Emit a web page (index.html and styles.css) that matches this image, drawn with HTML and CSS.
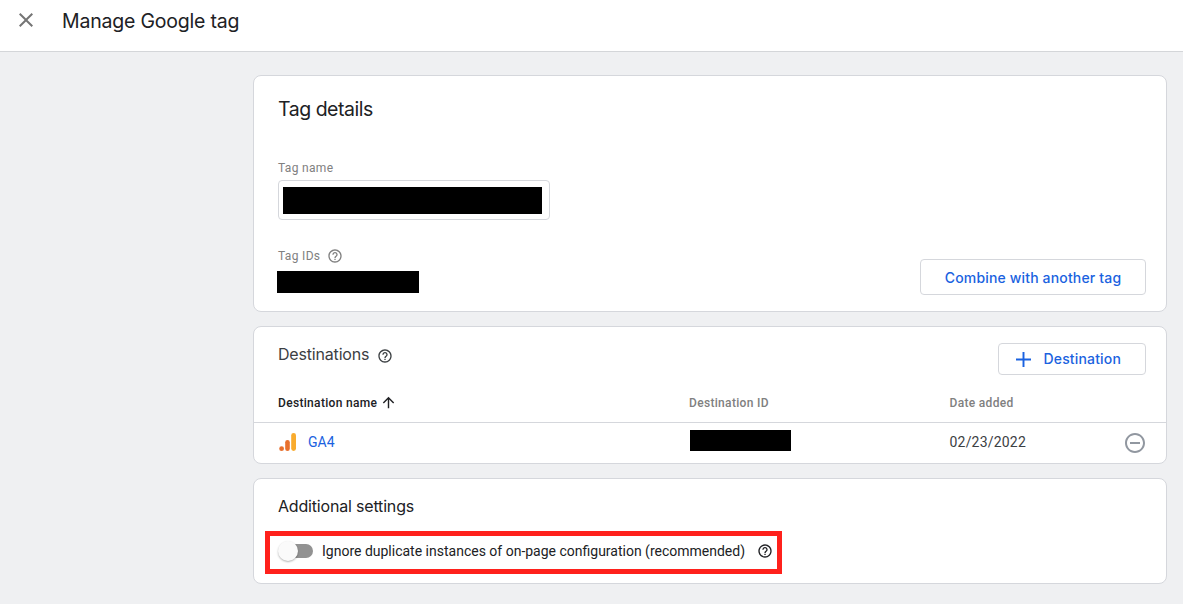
FILE: index.html
```html
<!DOCTYPE html>
<html lang="en">
<head>
<meta charset="utf-8">
<title>Manage Google tag</title>
<link rel="stylesheet" href="styles.css">
</head>
<body>
<svg width="0" height="0" class="sprite">
  <symbol id="help" viewBox="0 0 24 24"><path d="M11 18h2v-2h-2v2zm1-16C6.48 2 2 6.48 2 12s4.48 10 10 10 10-4.48 10-10S17.52 2 12 2zm0 18c-4.41 0-8-3.59-8-8s3.59-8 8-8 8 3.59 8 8-3.59 8-8 8zm0-14c-2.21 0-4 1.79-4 4h2c0-1.1.9-2 2-2s2 .9 2 2c0 2-3 1.75-3 5h2c0-2.25 3-2.5 3-5 0-2.21-1.79-4-4-4z"/></symbol>
</svg>
<header class="topbar">
  <svg class="close" viewBox="0 0 24 24"><path d="M19 6.41L17.59 5 12 10.59 6.41 5 5 6.41 10.59 12 5 17.59 6.41 19 12 13.41 17.59 19 19 17.59 13.41 12z"/></svg>
  <h1 class="title"><span>Manage Google tag</span></h1>
</header>
<main class="content">
  <section class="card details">
    <h2 class="card-title"><span>Tag details</span></h2>
    <label class="label name-label"><span>Tag name</span></label>
    <div class="input"><div class="redacted name-value"></div></div>
    <div class="ids-row">
      <div class="ids">
        <div class="label ids-label"><span>Tag IDs</span><svg class="help"><use href="#help"/></svg></div>
        <div class="redacted id-value"></div>
      </div>
      <button class="btn combine"><span>Combine with another tag</span></button>
    </div>
  </section>
  <section class="card destinations">
    <div class="dest-head">
      <h3 class="subtitle dest-title"><span>Destinations</span><svg class="help"><use href="#help"/></svg></h3>
      <button class="btn add"><svg class="plus" viewBox="0 0 14 14"><path d="M6.1 0h1.8v6.1H14v1.8H7.900V14H6.100V7.900H0V6.100h6.100z"/></svg><span>Destination</span></button>
    </div>
    <div class="row head">
      <div class="cell sorted"><span>Destination name</span><svg class="arrow" viewBox="0 0 24 24"><path d="M4 12l1.41 1.41L11 7.83V20h2V7.83l5.58 5.59L20 12l-8-8-8 8z"/></svg></div>
      <div class="cell"><span>Destination ID</span></div>
      <div class="cell"><span>Date added</span></div>
    </div>
    <div class="row item">
      <div class="cell"><svg class="ga" viewBox="0 0 18 20"><rect x="12.2" y="1" width="4.8" height="18" rx="2.4" fill="#f9ab2d"/><rect x="6.2" y="8" width="4.6" height="11" rx="2.3" fill="#e8702d"/><circle cx="2.6" cy="16.7" r="2.4" fill="#e8702d"/></svg><a class="link">GA4</a></div>
      <div class="cell"><div class="redacted dest-value"></div></div>
      <div class="cell date"><span>02/23/2022</span></div>
      <svg class="remove" viewBox="0 0 24 24"><path d="M7 11v2h10v-2H7zm5-9C6.48 2 2 6.48 2 12s4.48 10 10 10 10-4.48 10-10S17.52 2 12 2zm0 18c-4.41 0-8-3.59-8-8s3.59-8 8-8 8 3.59 8 8-3.59 8-8 8z"/></svg>
    </div>
  </section>
  <section class="card settings">
    <h3 class="subtitle"><span>Additional settings</span></h3>
    <div class="highlight">
      <div class="switch"><div class="track"></div><div class="thumb"></div></div>
      <span class="setting-label">Ignore duplicate instances of on-page configuration (recommended)</span>
      <svg class="help"><use href="#help"/></svg>
    </div>
  </section>
</main>
</body>
</html>
```
FILE: styles.css
```css
* { box-sizing: border-box; }
body { margin: 0; height: 604px; overflow: hidden; background: #eff0f2; color: #202124; font-family: Roboto, sans-serif; }
h1, h2, h3 { margin: 0; font-weight: 400; }
svg { display: block; flex: none; fill: currentColor; }
.sprite { position: absolute; }
.topbar { display: flex; align-items: flex-start; height: 52px; background: #fff; border-bottom: 1px solid #d4d6d9; }
.close { width: 24px; height: 24px; margin: 8px 0 0 14px; color: #757575; }
.title { margin: 7px 0 0 24px; font: 400 19.5px/28px Inter, sans-serif; letter-spacing: -.2px; }
.content { display: flex; flex-direction: column; gap: 14px; padding: 23px 16px 0 253px; }
.card { background: #fff; border: 1px solid #d5d7dc; border-radius: 8px; }
.details { height: 237px; padding: 19px 20px 0 24px; }
.card-title { font: 400 19.5px/28px Inter, sans-serif; letter-spacing: -.48px; }
.label { font-size: 12px; line-height: 16px; letter-spacing: .33px; color: #808080; }
.name-label { display: block; margin-top: 37px; }
.input { width: 272px; height: 40px; margin-top: 4px; padding: 6px 4px; border: 1px solid #d5d7dc; border-radius: 4px; }
.redacted { background: #000; }
.name-value { width: 259px; height: 27px; }
.ids-row { display: flex; justify-content: space-between; align-items: flex-start; margin-top: 28px; }
.ids-label { display: flex; gap: 7px; }
.help { width: 16px; height: 16px; }
.id-value { width: 142px; height: 22px; margin: 7px 0 0 -1px; }
.btn { display: flex; align-items: center; padding: 0; border: 1px solid #d5d7dc; border-radius: 4px; background: #fff; color: #1a62e0; font: 500 14px/20px Inter, sans-serif; letter-spacing: .16px; }
.combine { justify-content: center; width: 226px; height: 36px; margin-top: 11px; padding-top: 2px; }
.destinations { height: 138px; }
.dest-head { display: flex; justify-content: space-between; align-items: flex-start; height: 60px; padding: 16px 20px 0 24px; }
.subtitle { font: 400 16px/24px Inter, sans-serif; letter-spacing: -.18px; }
.dest-title { display: flex; gap: 8px; color: #3c4043; }
.dest-title span { margin-top: -1px; }
.dest-title .help { margin-top: 5px; }
.add { width: 148px; height: 32px; padding-left: 17px; gap: 12.5px; }
.plus { width: 15px; height: 15px; }
.row { display: grid; grid-template-columns: 411px 260.5px 174px 22px; padding-left: 24px; }
.cell { display: flex; align-items: flex-start; }
.head { height: 36px; padding-top: 8px; border-bottom: 1px solid #d5d7dc; font: 500 12px/16px Roboto, sans-serif; letter-spacing: .32px; color: #808080; }
.sorted { color: #202124; }
.arrow { width: 17px; height: 17px; margin: -1px 0 0 3px; }
.item { height: 40px; font-size: 14px; line-height: 20px; padding-top: 9px; }
.ga { width: 18px; height: 20px; margin: 0 0 0 1px; }
.link { margin-left: 11px; color: #1a62e0; }
.dest-value { width: 101px; height: 21px; margin: -2px 0 0 1px; }
.date { letter-spacing: .2px; color: #3c4043; }
.remove { width: 24px; height: 24px; margin: -1px 0 0 -1px; color: #9197a0; }
.settings { height: 106px; padding-top: 15px; }
.settings .subtitle { padding-left: 24px; }
.highlight { display: flex; align-items: center; width: 517px; height: 43px; margin: 13px 0 0 11px; padding: 0 0 3px 8px; border: 5px solid #ff211c; }
.switch { position: relative; width: 36px; height: 20px; }
.track { width: 28px; height: 14px; margin: 3px 0 0 7px; border-radius: 7px; background: #929292; }
.thumb { position: absolute; left: 0; top: 0; width: 20px; height: 20px; border-radius: 50%; background: #fafafa; box-shadow: 0 1px 2px rgba(0,0,0,.3); }
.setting-label { margin-left: 8px; font-size: 14px; line-height: 20px; letter-spacing: 0; white-space: nowrap; }
.highlight .help { margin-left: 12px; }
```
